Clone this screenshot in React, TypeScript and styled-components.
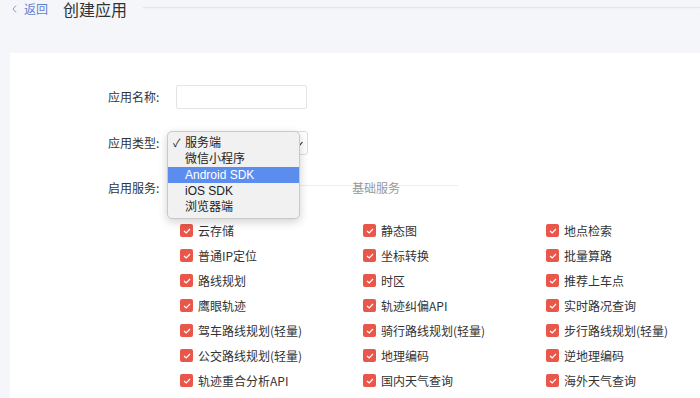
import React from "react";
import styled, { createGlobalStyle } from "styled-components";

const Global = createGlobalStyle`
  html, body { margin: 0; padding: 0; }
  body {
    background: #f5f6fa;
    font-family: "Noto Sans CJK SC", "Liberation Sans", sans-serif;
    color: #333;
    overflow: hidden;
  }
`;

const Page = styled.div`
  width: 700px;
  height: 398px;
  display: flex;
  flex-direction: column;
  background: #f5f6fa;
`;

const Header = styled.div`
  height: 16px;
  padding-top: 1px;
  display: flex;
  align-items: center;
  padding-left: 12px;
`;

const Back = styled.a`
  display: flex;
  align-items: center;
  gap: 7px;
  color: #5f7fcf;
  font-size: 12px;
  line-height: 16px;
  cursor: pointer;
`;

const Title = styled.h1`
  margin: 0 16px 0 15px;
  font-size: 16px;
  font-weight: 400;
  line-height: 16px;
  color: #333;
`;

const HeaderLine = styled.div`
  flex: 1;
  height: 1px;
  margin-top: -3px;
  background: #e4e5ea;
  box-shadow: 0 1px 2px rgba(0, 0, 0, 0.04);
`;

const Card = styled.div`
  flex: 1;
  margin: 36px 0 0 10px;
  background: #fff;
  padding: 32px 0 0 98px;
  display: flex;
  flex-direction: column;
`;

const FormRow = styled.div<{ $mt?: number }>`
  display: flex;
  align-items: flex-start;
  margin-top: ${(p) => p.$mt ?? 0}px;
  position: relative;
`;

const Label = styled.div`
  width: 68px;
  height: 24px;
  line-height: 24px;
  font-size: 12px;
  color: #333;
  flex-shrink: 0;
`;

const Input = styled.div`
  width: 129px;
  height: 22px;
  border: 1px solid #e3e4e8;
  border-radius: 2px;
  background: #fff;
`;

const SelectBox = styled.div`
  box-sizing: content-box;
  width: 126px;
  height: 22px;
  border: 1px solid #dcdde2;
  border-radius: 3px;
  background: #fff;
  display: flex;
  align-items: center;
  justify-content: flex-end;
  padding-right: 4px;
`;

const Menu = styled.div`
  position: absolute;
  left: 59px;
  top: 0;
  width: 131px;
  padding: 3px 0;
  background: #f1f1f1;
  border: 1px solid #c9c9c9;
  border-radius: 5px;
  box-shadow: 0 3px 10px rgba(0, 0, 0, 0.18);
  z-index: 5;
`;

const MenuItem = styled.div<{ $active?: boolean }>`
  position: relative;
  height: 16px;
  line-height: 16px;
  padding-left: 17px;
  font-size: 12px;
  font-family: "Liberation Sans", "Noto Sans CJK SC", sans-serif;
  color: ${(p) => (p.$active ? "#fff" : "#222")};
  background: ${(p) => (p.$active ? "#5b8def" : "transparent")};
`;

const Tick = styled.span`
  position: absolute;
  left: 5px;
  top: 0;
  font-size: 11px;
`;

const Services = styled.div`
  display: flex;
  flex-direction: column;
  margin: -24px 0 0 68px;
`;

const Divider = styled.div`
  position: relative;
  width: 282px;
  height: 24px;
  line-height: 24px;
  font-size: 12px;
  color: #999;
  padding-left: 176px;
  box-sizing: border-box;
  &::before {
    content: "";
    position: absolute;
    left: 0;
    right: 0;
    top: 9px;
    height: 1px;
    background: #eeeeef;
  }
  span { position: relative; }
`;

const Grid = styled.div`
  margin: 18px 0 0 4px;
  display: grid;
  grid-template-columns: repeat(3, 183px);
  grid-auto-rows: 25px;
`;

const Item = styled.label`
  display: flex;
  align-items: center;
  gap: 5px;
  font-size: 12px;
  color: #333;
  white-space: nowrap;
`;

const Box = styled.span`
  width: 13px;
  height: 13px;
  border-radius: 2px;
  background: #e9574a;
  display: flex;
  align-items: center;
  justify-content: center;
  flex-shrink: 0;
`;

const services = [
  "云存储", "静态图", "地点检索",
  "普通IP定位", "坐标转换", "批量算路",
  "路线规划", "时区", "推荐上车点",
  "鹰眼轨迹", "轨迹纠偏API", "实时路况查询",
  "驾车路线规划(轻量)", "骑行路线规划(轻量)", "步行路线规划(轻量)",
  "公交路线规划(轻量)", "地理编码", "逆地理编码",
  "轨迹重合分析API", "国内天气查询", "海外天气查询",
];

const options = ["服务端", "微信小程序", "Android SDK", "iOS SDK", "浏览器端"];

export default function App() {
  return (
    <Page>
      <Global />
      <Header>
        <Back>
          <svg width="5" height="8" viewBox="0 0 5 8">
            <polyline points="4,0.5 1,4 4,7.5" fill="none" stroke="#8b9bc9" strokeWidth="1" />
          </svg>
          返回
        </Back>
        <Title>创建应用</Title>
        <HeaderLine />
      </Header>
      <Card>
        <FormRow>
          <Label>应用名称:</Label>
          <Input />
        </FormRow>
        <FormRow $mt={22}>
          <Label>应用类型:</Label>
          <SelectBox>
            <svg width="6" height="5" viewBox="0 0 6 5">
              <polyline points="0.5,1 3,3.8 5.5,1" fill="none" stroke="#333" strokeWidth="1.1" />
            </svg>
          </SelectBox>
          <Menu>
            {options.map((o, i) => (
              <MenuItem key={o} $active={i === 2}>
                {i === 0 && <Tick>✓</Tick>}
                {o}
              </MenuItem>
            ))}
          </Menu>
        </FormRow>
        <FormRow $mt={21}>
          <Label>启用服务:</Label>
        </FormRow>
        <Services>
          <Divider>
            <span>基础服务</span>
          </Divider>
          <Grid>
            {services.map((s) => (
              <Item key={s}>
                <Box>
                  <svg width="8" height="6" viewBox="0 0 8 6">
                    <polyline points="1,3 3.2,5 7,1" fill="none" stroke="#fff" strokeWidth="1.2" />
                  </svg>
                </Box>
                {s}
              </Item>
            ))}
          </Grid>
        </Services>
      </Card>
    </Page>
  );
}
